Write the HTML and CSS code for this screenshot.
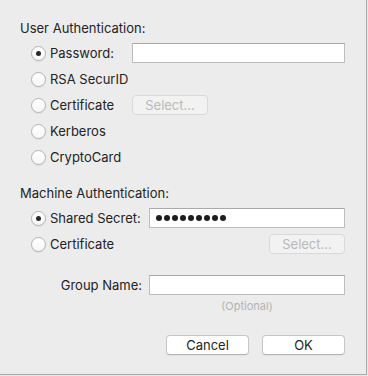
FILE: index.html
```
<!DOCTYPE html>
<html>
<head>
    <title>Authentication</title>
    <meta charset="UTF-8">
    <link rel="stylesheet" href="styles.css">
</head>
<body>
    <div class="dialog">
        <h3 class="section-title">User Authentication:</h3>
        <div class="option-list">
            <div class="row">
                <label class="radio-label user-col"><span class="radio checked"></span>Password:</label>
                <div class="field"></div>
            </div>
            <div class="row">
                <label class="radio-label"><span class="radio"></span>RSA SecurID</label>
            </div>
            <div class="row">
                <label class="radio-label user-col"><span class="radio"></span>Certificate</label>
                <button class="btn btn-disabled">Select...</button>
            </div>
            <div class="row">
                <label class="radio-label"><span class="radio"></span>Kerberos</label>
            </div>
            <div class="row">
                <label class="radio-label"><span class="radio"></span>CryptoCard</label>
            </div>
        </div>

        <h3 class="section-title machine-title">Machine Authentication:</h3>
        <div class="option-list">
            <div class="row">
                <label class="radio-label machine-col"><span class="radio checked"></span>Shared Secret:</label>
                <div class="field secret">
                    <span class="dot"></span><span class="dot"></span><span class="dot"></span>
                    <span class="dot"></span><span class="dot"></span><span class="dot"></span>
                    <span class="dot"></span><span class="dot"></span><span class="dot"></span>
                </div>
            </div>
            <div class="row">
                <label class="radio-label"><span class="radio"></span>Certificate</label>
                <button class="btn btn-disabled push-right">Select...</button>
            </div>
        </div>

        <div class="row group-row">
            <label class="group-label">Group Name:</label>
            <div class="field"></div>
        </div>
        <div class="hint-row">
            <span class="hint">(Optional)</span>
        </div>

        <div class="actions">
            <button class="btn btn-action">Cancel</button>
            <button class="btn btn-action">OK</button>
        </div>
    </div>
</body>
</html>
```

FILE: styles.css
```
* {
    box-sizing: border-box;
}
body {
    margin: 0;
    background-color: #e9e9e9;
    font-family: Inter, "Liberation Sans", Arial, sans-serif;
    font-size: 13px;
    color: #232323;
}
.dialog {
    width: 367px;
    height: 375px;
    padding: 20px 21px 0 20px;
    background-color: #ececec;
    border-right: 1px solid #a9a9a9;
    border-bottom: 1px solid #a9a9a9;
}
.section-title {
    margin: 0 0 4px 0;
    font-size: 13px;
    font-weight: normal;
    line-height: 16px;
}
.machine-title {
    margin-top: 15px;
}
.option-list {
    padding-left: 11px;
}
.row {
    display: flex;
    align-items: center;
    height: 26px;
}
.radio-label {
    display: flex;
    align-items: center;
    gap: 4px;
}
.user-col {
    width: 101px;
    flex: none;
}
.machine-col {
    width: 118px;
    flex: none;
}
.radio {
    width: 15px;
    height: 15px;
    border: 1px solid #b3b3b3;
    border-radius: 50%;
    background: linear-gradient(#ffffff, #f6f6f6);
    box-shadow: 0 1px 1px rgba(0, 0, 0, 0.06);
    display: flex;
    align-items: center;
    justify-content: center;
}
.radio.checked::after {
    content: "";
    width: 5px;
    height: 5px;
    border-radius: 50%;
    background-color: #2a2a2a;
}
.field {
    flex: 1;
    height: 20px;
    background-color: #ffffff;
    border: 1px solid #bdbdbd;
    border-top-color: #a9a9a9;
}
.secret {
    display: flex;
    align-items: center;
    gap: 2px;
    padding-left: 6px;
}
.dot {
    width: 6px;
    height: 6px;
    border-radius: 50%;
    background-color: #1e1e1e;
}
.btn {
    font-family: inherit;
    font-size: 13px;
    height: 20px;
    padding: 0;
    border-radius: 4px;
}
.btn-disabled {
    width: 76px;
    background-color: #f2f2f2;
    border: 1px solid #d9d9d9;
    color: #b9b9b9;
}
.push-right {
    margin-left: auto;
}
.group-row {
    margin-top: 15px;
}
.group-label {
    width: 129px;
    padding-left: 11px;
    padding-right: 7px;
    text-align: right;
    flex: none;
}
.hint-row {
    padding-left: 129px;
    text-align: center;
    height: 14px;
    line-height: 14px;
}
.hint {
    font-size: 11px;
    color: #b3b3b3;
}
.actions {
    display: flex;
    justify-content: flex-end;
    gap: 13px;
    margin-top: 23px;
}
.btn-action {
    width: 83px;
    background-color: #ffffff;
    border: 1px solid #c6c6c6;
    border-bottom-color: #b5b5b5;
    color: #232323;
    box-shadow: 0 1px 1px rgba(0, 0, 0, 0.05);
}
```
